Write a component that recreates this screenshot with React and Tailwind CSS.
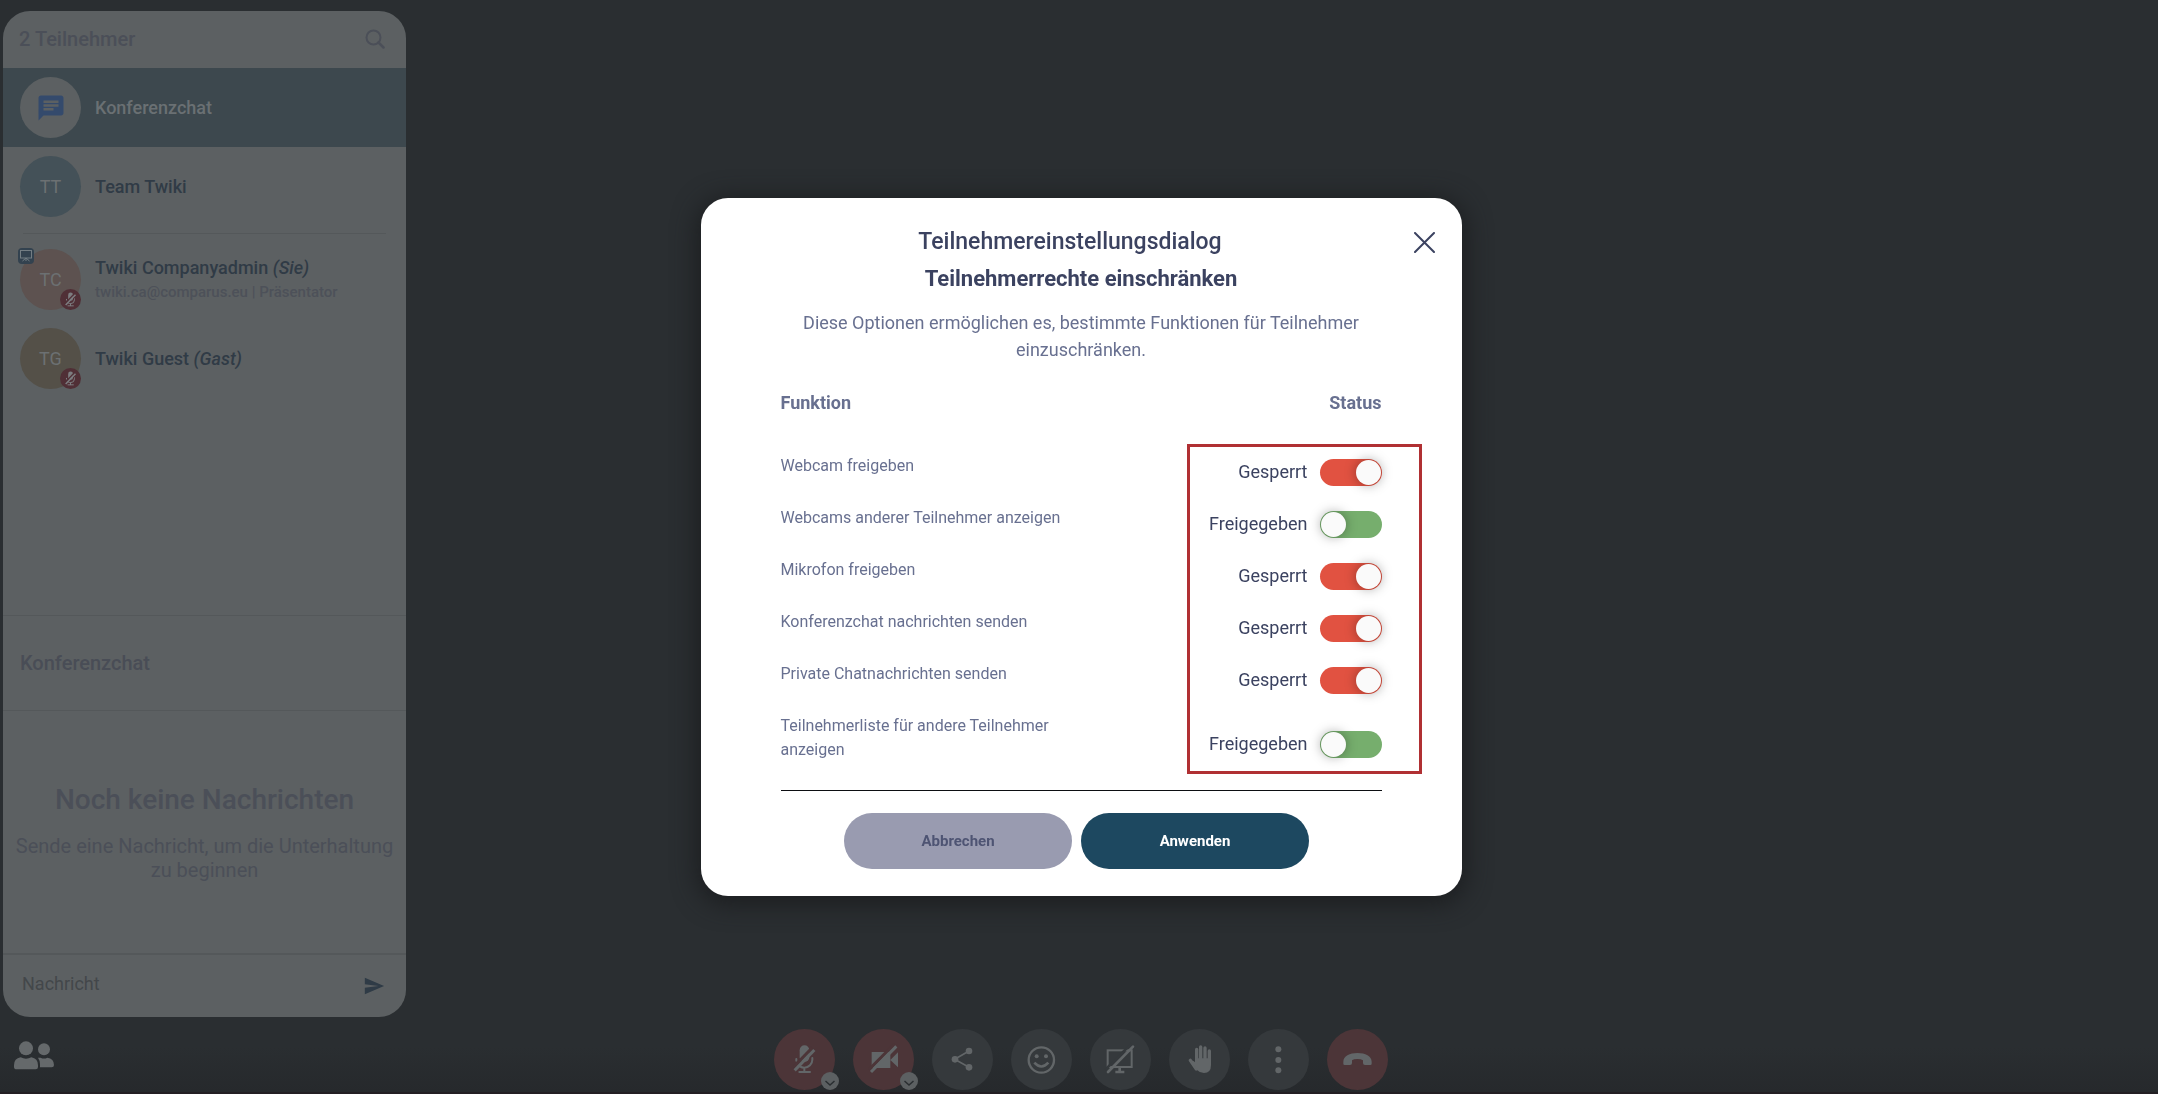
import React, { useState } from "react";
import { MdChat, MdSend } from "react-icons/md";

const initialRights = [
  { id: "cam", label: "Webcam freigeben", locked: true },
  { id: "cams", label: "Webcams anderer Teilnehmer anzeigen", locked: false },
  { id: "mic", label: "Mikrofon freigeben", locked: true },
  { id: "chat", label: "Konferenzchat nachrichten senden", locked: true },
  { id: "private", label: "Private Chatnachrichten senden", locked: true },
  { id: "list", label: "Teilnehmerliste für andere Teilnehmer anzeigen", locked: false },
];

function MicOffShape() {
  return (
    <>
      <rect x="77" y="49" width="29" height="50" rx="14.5" fill="currentColor" stroke="none" />
      <path d="M115 87v5a24 24 0 0 1-24 24c-5 0-9-1-12-3M67 90v5M91 116v12M76 129h32" strokeWidth="6" strokeLinecap="round" />
      <path d="M115 56L58 115" stroke="var(--gap)" strokeWidth="9" />
      <path d="M121 63L62 124" strokeWidth="9" />
    </>
  );
}

function IconFrame({ children, box = "0 0 183 183", className = "size-full" }) {
  return (
    <svg viewBox={box} className={className} fill="none" stroke="currentColor" aria-hidden="true">
      {children}
    </svg>
  );
}

const tools = [
  { label: "Mikrofon", red: true, menu: true, shape: <MicOffShape /> },
  {
    label: "Kamera",
    red: true,
    menu: true,
    shape: (
      <>
        <path d="M56 69h56v24l23-23v45l-23-22v24H56z" fill="currentColor" stroke="none" />
        <path d="M124 45L48 122" stroke="var(--gap)" strokeWidth="9" />
        <path d="M130 52L54 129" strokeWidth="9" />
      </>
    ),
  },
  {
    label: "Teilen",
    shape: (
      <>
        <path d="M111 66L68 91l43 24" strokeWidth="5" />
        <g fill="currentColor" stroke="none">
          <circle cx="111" cy="66" r="10" />
          <circle cx="69" cy="91" r="10" />
          <circle cx="111" cy="115" r="10" />
        </g>
      </>
    ),
  },
  {
    label: "Reaktionen",
    shape: (
      <>
        <circle cx="91" cy="93" r="38" strokeWidth="7" />
        <circle cx="77" cy="82" r="6" fill="currentColor" stroke="none" />
        <circle cx="105" cy="82" r="6" fill="currentColor" stroke="none" />
        <path d="M70 101q21 23 42 0" strokeWidth="8" />
      </>
    ),
  },
  {
    label: "Bildschirm teilen",
    shape: (
      <>
        <rect x="53" y="64" width="72" height="50" strokeWidth="6" />
        <path d="M89 114v12M76 129h27" strokeWidth="8" />
        <path d="M124 44L46 122" stroke="var(--gap)" strokeWidth="8" />
        <path d="M129 53L54 129" strokeWidth="8" strokeLinecap="round" />
      </>
    ),
  },
  {
    label: "Hand heben",
    shape: (
      <>
        <path d="M83 61v38M95 54v40M108 57v38M121 66v35" strokeWidth="10" strokeLinecap="round" />
        <path d="M64 94l18 26" strokeWidth="10" strokeLinecap="round" />
        <path d="M78 88h48v20q0 24-21 24-13 0-20-8L66 96q8-3 12 4z" fill="currentColor" stroke="none" />
      </>
    ),
  },
  {
    label: "Mehr",
    shape: (
      <g fill="currentColor" stroke="none">
        <circle cx="91" cy="61" r="9" />
        <circle cx="91" cy="93" r="9" />
        <circle cx="91" cy="124" r="9" />
      </g>
    ),
  },
  {
    label: "Auflegen",
    red: true,
    shape: (
      <path
        d="M49 98c0-16 19-26 42.500-26S134 82 134 98v6q0 4-4 4h-16q-6 0-6-6v-8q-6-4-17-4t-16 4v8q0 6-6 6H53q-4 0-4-4z"
        fill="currentColor"
        stroke="none"
      />
    ),
  },
];

function Avatar({ initials, color, muted, presenter }) {
  return (
    <span
      className={`relative flex size-[61px] shrink-0 items-center justify-center rounded-full text-lg font-normal text-[#6c7072] ${color}`}
    >
      {initials}
      {presenter && (
        <span className="absolute -top-px -left-0.5 flex size-4 items-center justify-center rounded bg-[#33424f] text-[#737d83]">
          <IconFrame box="0 0 16 16">
            <rect x="2.500" y="2.500" width="11" height="7.500" />
            <path d="M8 10v3M8 10l-3.500 3M8 10l3.500 3" />
          </IconFrame>
        </span>
      )}
      {muted && (
        <span className="absolute right-0 bottom-0 size-[21px] rounded-full bg-[#502f36] text-[#7d7d80] [--gap:#502f36]">
          <IconFrame box="28 28 126 126">
            <MicOffShape />
          </IconFrame>
        </span>
      )}
    </span>
  );
}

function Person({ name, suffix, detail, ...avatar }) {
  return (
    <li>
      <button type="button" className="flex h-[79px] w-full items-center gap-3.5 px-[17px] text-left text-lg font-medium text-[#303b46]">
        <Avatar {...avatar} />
        <span className="flex flex-col">
          <span className="leading-6">
            {name} {suffix && <i>{suffix}</i>}
          </span>
          {detail && <span className="text-[15px] leading-6 text-[#4d5159]">{detail}</span>}
        </span>
      </button>
    </li>
  );
}

function Sidebar() {
  return (
    <aside className="mt-[11px] ml-[3px] flex min-h-0 w-[403px] flex-1 flex-col overflow-hidden rounded-[27px] bg-[#5c6062]">
      <header className="flex h-[57px] shrink-0 items-center justify-between pr-[21px] pb-0.5 pl-4 text-[#4b4f58]">
        <h2 className="text-xl font-medium">2 Teilnehmer</h2>
        <button type="button" aria-label="Suchen" className="size-5">
          <IconFrame box="0 0 20 20">
            <circle cx="8.500" cy="8.500" r="7" strokeWidth="2" />
            <path d="M13.500 13.500l5 5" strokeWidth="2.500" strokeLinecap="round" />
          </IconFrame>
        </button>
      </header>
      <button type="button" className="flex h-[79px] shrink-0 items-center gap-3.5 bg-[#3d484e] px-[17px] text-lg font-medium text-[#6a7073]">
        <span className="flex size-[61px] items-center justify-center rounded-full bg-[#5c6062] text-[#344a6c]">
          <MdChat className="size-[30px]" />
        </span>
        Konferenzchat
      </button>
      <ul className="flex-1">
        <Person name="Team Twiki" initials="TT" color="bg-[#445158]" />
        <li className="mx-5 mt-[7px] mb-1.5 h-px bg-[#54585a]" />
        <Person
          name="Twiki Companyadmin"
          suffix="(Sie)"
          detail="twiki.ca@comparus.eu | Präsentator"
          initials="TC"
          color="bg-[#5d5250]"
          muted
          presenter
        />
        <Person name="Twiki Guest" suffix="(Gast)" initials="TG" color="bg-[#545048]" muted />
      </ul>
      <h3 className="flex h-24 shrink-0 items-center border-y border-[#54585a] px-[17px] text-xl font-medium text-[#494d56]">Konferenzchat</h3>
      <div className="flex h-[242px] shrink-0 flex-col items-center justify-center px-2 pb-0.5 text-center text-[#4b4f58]">
        <p className="text-[28px] leading-10 font-medium">Noch keine Nachrichten</p>
        <p className="mt-3.5 text-xl leading-6">Sende eine Nachricht, um die Unterhaltung zu beginnen</p>
      </div>
      <form className="flex h-16 shrink-0 items-center border-t-2 border-[#54585a] pr-[21px] pl-[19px]">
        <input
          aria-label="Nachricht"
          placeholder="Nachricht"
          className="min-w-0 flex-1 bg-transparent pb-1 text-lg outline-none placeholder:text-[#43474a]"
        />
        <button type="button" aria-label="Senden" className="text-[#2f3b46]">
          <MdSend className="size-[22px]" />
        </button>
      </form>
    </aside>
  );
}

function Toolbar() {
  return (
    <nav className="flex gap-[18px] pl-1">
      {tools.map((tool) => (
        <div key={tool.label} className="relative">
          <button
            type="button"
            aria-label={tool.label}
            className={`block size-[61px] rounded-full text-[#626668] ${
              tool.red ? "bg-[#4c3538] [--gap:#4c3538]" : "bg-[#35393c] [--gap:#35393c]"
            }`}
          >
            <IconFrame>{tool.shape}</IconFrame>
          </button>
          {tool.menu && (
            <button
              type="button"
              aria-label={`${tool.label} auswählen`}
              className="absolute -right-1 bottom-0 size-[18px] rounded-full bg-[#5c6062] text-[#2a2e31]"
            >
              <IconFrame box="0 0 18 18">
                <path d="M4.500 9l4.500 4 4.500-4" strokeWidth="1.500" />
              </IconFrame>
            </button>
          )}
        </div>
      ))}
    </nav>
  );
}

function Dialog() {
  const [rights, setRights] = useState(initialRights);
  const toggle = (id) => setRights(rights.map((r) => (r.id === id ? { ...r, locked: !r.locked } : r)));

  return (
    <section
      role="dialog"
      aria-labelledby="dialog-title"
      className="relative w-full max-w-[761px] rounded-[27px] bg-white px-20 py-[26px] text-[#687090] shadow-[0_4px_24px_4px_#1c1e20]"
    >
      <button type="button" aria-label="Schließen" className="absolute top-[34px] right-[27px] size-[21px] text-[#3b4260]">
        <IconFrame box="0 0 21 21">
          <path d="M1 1l19 19M20 1L1 20" strokeWidth="2" strokeLinecap="round" />
        </IconFrame>
      </button>
      <div className="text-center">
        <h1 id="dialog-title" className="pr-[22px] text-[23px] leading-9 font-medium text-[#3b4260]">
          Teilnehmereinstellungsdialog
        </h1>
        <h2 className="text-[22px] leading-[38px] font-bold text-[#3b4260]">Teilnehmerrechte einschränken</h2>
        <p className="mx-auto mt-[11px] max-w-[560px] text-lg leading-[27px]">
          Diese Optionen ermöglichen es, bestimmte Funktionen für Teilnehmer einzuschränken.
        </p>
      </div>
      <div className="relative border-b border-[#0c0e12] pb-2">
        <table className="w-full">
          <thead>
            <tr className="h-[83px] text-lg font-bold">
              <th className="pb-1 text-left">Funktion</th>
              <th className="pb-1 text-right">Status</th>
            </tr>
          </thead>
          <tbody>
            {rights.map((r) => (
              <tr key={r.id}>
                <td className="pt-2 pb-5 align-top">
                  <label htmlFor={r.id} className="block max-w-[300px] text-base leading-6">
                    {r.label}
                  </label>
                </td>
                <td className="align-middle">
                  <div className="flex items-center justify-end gap-3 text-lg text-[#3b4260]">
                    <span>{r.locked ? "Gesperrt" : "Freigegeben"}</span>
                    <input
                      id={r.id}
                      type="checkbox"
                      role="switch"
                      checked={r.locked}
                      onChange={() => toggle(r.id)}
                      className="flex h-[27px] w-[62px] appearance-none items-center rounded-full bg-[#76ae6d] p-px before:size-[25px] before:rounded-full before:bg-[#fafafa] before:shadow-[0_0_12px_#00000059] checked:justify-end checked:bg-[#e15241]"
                    />
                  </div>
                </td>
              </tr>
            ))}
          </tbody>
        </table>
        <div className="pointer-events-none absolute top-[81px] -right-10 bottom-4 w-[235px] border-[3px] border-[#b03033]" />
      </div>
      <div className="mt-[22px] mb-px flex justify-center text-[15px] font-bold">
        <button type="button" className="mr-[9px] h-14 w-[228px] rounded-full bg-[#999bb0] text-[#4e5473]">
          Abbrechen
        </button>
        <button type="button" className="mr-[9px] h-14 w-[228px] rounded-full bg-[#1d4860] text-white">
          Anwenden
        </button>
      </div>
    </section>
  );
}

export default function App() {
  return (
    <div className="flex h-screen flex-col bg-[#2a2e31] font-['Roboto','Liberation_Sans',sans-serif]">
      <Sidebar />
      <footer className="grid h-[77px] shrink-0 grid-cols-[1fr_auto_1fr] items-start border-b-2 border-[#231f24] bg-linear-to-b from-[#2a2e31] from-40% to-[#26292c] pt-3">
        <button type="button" aria-label="Teilnehmer" className="mt-3 ml-3.5 h-[29px] w-10 text-[#65696b]">
          <IconFrame box="0 0 120 87">
            <g fill="currentColor" stroke="none">
              <circle cx="36" cy="22" r="21" />
              <circle cx="90" cy="25" r="18" />
              <path d="M20 49q16 8 32 0 20 3 20 24v5q0 7-7 7H8q-8 0-8-8v-4q0-21 20-24z" />
              <path d="M72 50h8q10 5 20 0 20 3 20 22 0 7-7 7H78V70q0-12-6-20z" />
            </g>
          </IconFrame>
        </button>
        <Toolbar />
      </footer>
      <div className="fixed inset-0 flex items-center justify-center pl-1">
        <Dialog />
      </div>
    </div>
  );
}
